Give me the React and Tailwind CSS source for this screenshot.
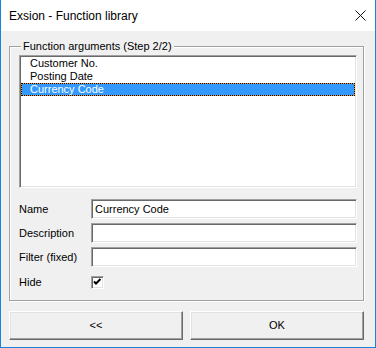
import { useState } from "react";

const items = ["Customer No.", "Posting Date", "Currency Code"];

function Sunken({ className = "", children }) {
  return (
    <div
      className={`border border-t-[#a0a0a0] border-l-[#a0a0a0] border-b-white border-r-white bg-white shadow-[inset_1px_1px_0_#696969,inset_-1px_-1px_0_#e3e3e3] ${className}`}
    >
      {children}
    </div>
  );
}

function Field({ label, value }) {
  return (
    <div className="flex items-center h-[20px]">
      <span className="w-[72px]">{label}</span>
      <Sunken className="w-[266px] h-[20px] flex items-center px-[3px]">
        {value}
      </Sunken>
    </div>
  );
}

function WinButton({ children }) {
  return (
    <button className="w-[174px] h-[29px] flex items-center justify-center bg-[#f0f0f0] border border-t-white border-l-white border-b-[#696969] border-r-[#696969] shadow-[inset_-1px_-1px_0_#a0a0a0,inset_1px_1px_0_#e3e3e3] text-black">
      {children}
    </button>
  );
}

export default function App() {
  const [selected, setSelected] = useState(2);
  const [hide, setHide] = useState(true);

  return (
    <div
      className="w-[376px] h-[348px] flex flex-col bg-[#f0f0f0] border-x border-b border-[#1883d7] text-[11px] text-black"
      style={{ fontFamily: '"Liberation Sans", Arial, sans-serif' }}
    >
      <div className="h-[31px] shrink-0 bg-white flex items-center justify-between pl-[8px] pr-[9px]">
        <span className="text-[12px] text-black">Exsion - Function library</span>
        <svg width="11" height="11" viewBox="0 0 11 11" className="mb-[1px]">
          <path d="M0.5 0.5 L10.5 10.5 M10.5 0.5 L0.5 10.5" stroke="#111" strokeWidth="1" />
        </svg>
      </div>

      <div className="pl-[8px]">
        <div className="relative mt-[15px] w-[355px] h-[255px] border border-[#a0a0a0] shadow-[inset_1px_1px_0_#fff,1px_1px_0_#fff] pt-[8px] pl-[9px]">
          <span className="absolute left-[11px] top-[-8px] px-[2px] bg-[#f0f0f0] leading-[14px]">
            Function arguments (Step 2/2)
          </span>

          <Sunken className="w-[338px] h-[133px] p-px">
            {items.map((item, i) =>
              selected === i ? (
                <div key={item} className="bg-[#e69a30]">
                  <div className="h-[13px] leading-[11px] border border-dotted border-black bg-[#3399ff] bg-clip-padding text-white pl-[8px]">
                    {item}
                  </div>
                </div>
              ) : (
                <div
                  key={item}
                  className="h-[13px] leading-[13px] pl-[9px] cursor-default"
                  onClick={() => setSelected(i)}
                >
                  {item}
                </div>
              )
            )}
          </Sunken>

          <div className="mt-[11px] flex flex-col gap-[4px]">
            <Field label="Name" value="Currency Code" />
            <Field label="Description" value="" />
            <Field label="Filter (fixed)" value="" />
            <div className="flex items-center h-[13px] mt-[5px]">
              <span className="w-[72px]">Hide</span>
              <Sunken className="w-[13px] h-[13px] flex items-center justify-center">
                <svg
                  width="9"
                  height="9"
                  viewBox="0 0 9 9"
                  onClick={() => setHide(!hide)}
                >
                  {hide && (
                    <path
                      d="M1 3.5 L3 5.5 L7.5 1"
                      stroke="#000"
                      strokeWidth="2"
                      fill="none"
                    />
                  )}
                </svg>
              </Sunken>
            </div>
          </div>
        </div>

        <div className="mt-[10px] flex gap-[7px]">
          <WinButton>&lt;&lt;</WinButton>
          <WinButton>OK</WinButton>
        </div>
      </div>
    </div>
  );
}
